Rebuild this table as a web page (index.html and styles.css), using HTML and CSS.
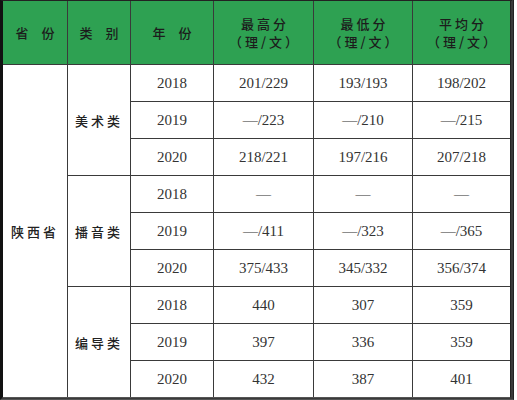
FILE: index.html
```html
<!DOCTYPE html>
<html lang="zh">
<head>
<meta charset="utf-8">
<link rel="stylesheet" href="styles.css">
</head>
<body>
<div class="table">
  <div class="cell head"><span class="wide">省份</span></div>
  <div class="cell head"><span class="wide">类别</span></div>
  <div class="cell head"><span class="wide">年份</span></div>
  <div class="cell head two"><span class="l1">最高分</span><span class="l2">（理/文）</span></div>
  <div class="cell head two"><span class="l1">最低分</span><span class="l2">（理/文）</span></div>
  <div class="cell head two"><span class="l1">平均分</span><span class="l2">（理/文）</span></div>

  <div class="cell zh prov">陕西省</div>
  <div class="cell zh cat c1">美术类</div>
  <div class="cell zh cat c2">播音类</div>
  <div class="cell zh cat c3">编导类</div>

  <div class="cell num">2018</div><div class="cell num">201/229</div><div class="cell num">193/193</div><div class="cell num">198/202</div>
  <div class="cell num">2019</div><div class="cell num">—/223</div><div class="cell num">—/210</div><div class="cell num">—/215</div>
  <div class="cell num">2020</div><div class="cell num">218/221</div><div class="cell num">197/216</div><div class="cell num">207/218</div>
  <div class="cell num">2018</div><div class="cell num">—</div><div class="cell num">—</div><div class="cell num">—</div>
  <div class="cell num">2019</div><div class="cell num">—/411</div><div class="cell num">—/323</div><div class="cell num">—/365</div>
  <div class="cell num">2020</div><div class="cell num">375/433</div><div class="cell num">345/332</div><div class="cell num">356/374</div>
  <div class="cell num">2018</div><div class="cell num">440</div><div class="cell num">307</div><div class="cell num">359</div>
  <div class="cell num">2019</div><div class="cell num">397</div><div class="cell num">336</div><div class="cell num">359</div>
  <div class="cell num">2020</div><div class="cell num">432</div><div class="cell num">387</div><div class="cell num">401</div>
</div>
</body>
</html>
```

FILE: styles.css
```css
html, body {
  margin: 0;
  padding: 0;
  background: #ffffff;
}

.table {
  display: grid;
  width: max-content;
  grid-template-columns: 64px 62px 82px 99px 98px 97px;
  grid-template-rows: 63px repeat(9, 36px);
  gap: 1px;
  background: #3a3a3a;
  border-left: 3px solid #111111;
  border-top: 1px solid #222222;
  border-right: 4px double #222222;
  border-bottom: 3px double #555555;
}

.cell {
  display: flex;
  align-items: center;
  justify-content: center;
  background: #ffffff;
  text-align: center;
  color: #2a2a2a;
}

.head {
  background: #2ea152;
  color: #1c1c1c;
  font-family: "Noto Sans CJK SC", sans-serif;
  font-weight: 500;
  font-size: 13px;
  line-height: 18px;
}

.head.two {
  flex-direction: column;
  padding-top: 1px;
}

.l1 {
  letter-spacing: 3px;
  margin-right: -3px;
}

.l2 {
  letter-spacing: 3px;
  margin-right: -3px;
}

.wide {
  letter-spacing: 13px;
  margin-right: -13px;
}

.zh {
  font-family: "Noto Sans CJK SC", sans-serif;
  font-weight: 500;
  font-size: 13px;
  letter-spacing: 3px;
  color: #222222;
}

.num {
  font-family: "Liberation Serif", "Noto Sans CJK SC", serif;
  font-size: 15px;
  color: #333333;
}

.prov {
  grid-column: 1;
  grid-row: 2 / span 9;
}

.cat { grid-column: 2; }
.c1 { grid-row: 2 / span 3; }
.c2 { grid-row: 5 / span 3; }
.c3 { grid-row: 8 / span 3; }
```
